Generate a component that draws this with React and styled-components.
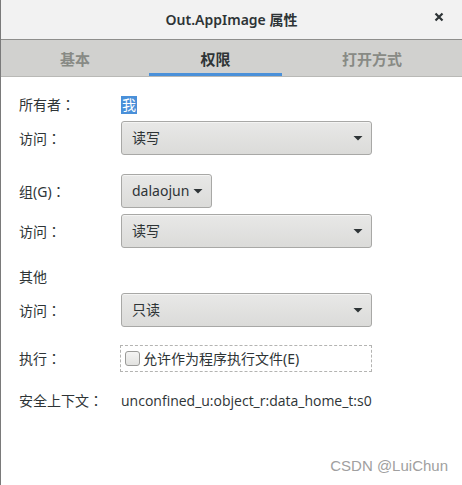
import styled, { createGlobalStyle } from 'styled-components'

const GlobalStyle = createGlobalStyle`
  html, body {
    margin: 0;
    padding: 0;
    background: #ffffff;
  }
  body {
    font-family: "Noto Sans", "Noto Sans CJK SC", sans-serif;
    font-size: 14px;
    line-height: 20px;
    color: #2e3436;
  }
`

const Window = styled.div`
  position: relative;
  width: 462px;
  height: 485px;
  box-sizing: border-box;
  border-left: 1px solid #7a7a7a;
  background: #ffffff;
  overflow: hidden;
`

const TitleBar = styled.div`
  height: 39px;
  background: #f2f2f2;
  border-bottom: 1px solid #8e8e8c;
  display: flex;
  align-items: center;
  justify-content: center;
  position: relative;
`

const Title = styled.div`
  font-size: 14px;
  font-weight: 600;
  color: #2e3436;
`

const Close = styled.button`
  position: absolute;
  right: 17px;
  top: 11px;
  width: 12px;
  height: 12px;
  padding: 0;
  border: 0;
  background: none;
  display: flex;
`

const Tabs = styled.div`
  display: grid;
  grid-template-columns: 148px 133px 1fr;
  height: 36px;
  background: #d1d1cf;
  border-bottom: 1px solid #b9b9b6;
`

const Tab = styled.div`
  display: flex;
  align-items: center;
  justify-content: center;
  font-size: 15px;
  font-weight: 700;
  color: ${p => (p.$active ? '#2e3436' : '#888a85')};
  box-shadow: ${p => (p.$active ? 'inset 0 -3px 0 #4a90d9' : 'none')};
  padding-top: 1px;
`

const Content = styled.div`
  padding: 17px 0 0 18px;
  display: flex;
  flex-direction: column;
`

const Group = styled.div`
  display: flex;
  flex-direction: column;
  gap: ${p => p.$gap ?? 7}px;
  margin-bottom: ${p => p.$after ?? 19}px;
`

const Row = styled.div`
  display: grid;
  grid-template-columns: 102px 251px;
  align-items: center;
  height: ${p => p.$h ?? 20}px;
`

const Label = styled.span`
  white-space: nowrap;
`

const Colon = styled.span`
  font-family: "Noto Sans CJK TC", sans-serif;
`

const Selected = styled.span`
  justify-self: start;
  background: #4a90d9;
  color: #ffffff;
  line-height: 18px;
  padding: 0 1px;
`

const Combo = styled.div`
  height: 34px;
  box-sizing: border-box;
  border: 1px solid #a8a8a6;
  border-radius: 3px;
  background: linear-gradient(#e8e8e7, #dbdbd9);
  box-shadow: inset 0 1px 0 #f4f4f3;
  display: flex;
  align-items: center;
  justify-content: space-between;
  padding: 0 6px 0 10px;
  width: ${p => p.$w ?? 251}px;
`

const ComboText = styled.span`
  color: #2e3436;
`

const Arrow = () => (
  <svg width="12" height="8" viewBox="0 0 12 8">
    <path d="M1.5 2 L10.5 2 L6 6.5 Z" fill="#2e3436" />
  </svg>
)

const ComboArrowBox = styled.span`
  display: flex;
  align-items: center;
  width: 14px;
  justify-content: center;
`

const CheckFrame = styled.label`
  height: 27px;
  box-sizing: border-box;
  border: 1px dashed #b4b4b2;
  display: flex;
  align-items: center;
  gap: 3px;
  padding-left: 4px;
  margin-left: -1px;
`

const Check = styled.span`
  width: 15px;
  height: 15px;
  box-sizing: border-box;
  border: 1px solid #9a9a98;
  border-radius: 3px;
  background: linear-gradient(#f4f4f3, #e2e2e0);
`

const Context = styled.span`
  font-family: "Open Sans", "Noto Sans", sans-serif;
  font-size: 14px;
  white-space: nowrap;
`

const Watermark = styled.div`
  position: absolute;
  right: 14px;
  bottom: 9px;
  font-family: "Liberation Sans", Arial, sans-serif;
  font-size: 15px;
  color: #a0a0a0;
`

function Select({ value, width }) {
  return (
    <Combo $w={width}>
      <ComboText>{value}</ComboText>
      <ComboArrowBox>
        <Arrow />
      </ComboArrowBox>
    </Combo>
  )
}

function Field({ label, colon = true, h, children }) {
  return (
    <Row $h={h}>
      <Label>
        {label}
        {colon && <Colon>：</Colon>}
      </Label>
      {children}
    </Row>
  )
}

export default function App() {
  return (
    <>
      <GlobalStyle />
      <Window>
        <TitleBar>
          <Title>Out.AppImage 属性</Title>
          <Close aria-label="close">
            <svg width="12" height="12" viewBox="0 0 12 12">
              <path d="M2.5 2.5 L9.5 9.5 M9.5 2.5 L2.5 9.5" stroke="#2e3436" strokeWidth="2.2" />
            </svg>
          </Close>
        </TitleBar>
        <Tabs>
          <Tab>基本</Tab>
          <Tab $active>权限</Tab>
          <Tab>打开方式</Tab>
        </Tabs>
        <Content>
          <Group>
            <Field label="所有者">
              <Selected>我</Selected>
            </Field>
            <Field label="访问" h={34}>
              <Select value="读写" />
            </Field>
          </Group>
          <Group $gap={6}>
            <Field label="组(G)" h={34}>
              <Select value="dalaojun" width={91} />
            </Field>
            <Field label="访问" h={34}>
              <Select value="读写" />
            </Field>
          </Group>
          <Group $gap={6} $after={18}>
            <Field label="其他" colon={false} />
            <Field label="访问" h={34}>
              <Select value="只读" />
            </Field>
          </Group>
          <Group $after={18}>
            <Field label="执行" h={27}>
              <CheckFrame>
                <Check />
                <span>允许作为程序执行文件(E)</span>
              </CheckFrame>
            </Field>
          </Group>
          <Group>
            <Field label="安全上下文">
              <Context>unconfined_u:object_r:data_home_t:s0</Context>
            </Field>
          </Group>
        </Content>
        <Watermark>CSDN @LuiChun</Watermark>
      </Window>
    </>
  )
}
